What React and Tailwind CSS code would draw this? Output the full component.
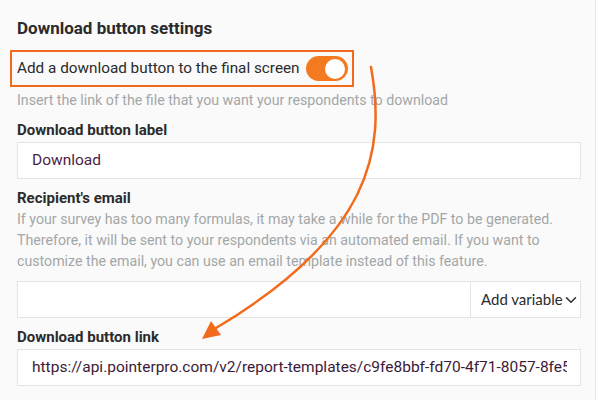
import { ChevronDown } from 'lucide-react'

const HEAD = 'font-["Roboto",sans-serif]'

export default function App() {
  return (
    <div className={`relative w-[600px] h-[400px] overflow-hidden bg-white ${HEAD}`}>
      <div className="w-[596px] h-full bg-[#fafafa] border-r border-[#e6e6e6] pl-[17px] pr-[14px] pt-[16px]">
        {/* Title */}
        <h2 className="text-[17px] leading-[24px] font-bold text-[#2b2b2b]">Download button settings</h2>

        {/* Toggle row, highlighted */}
        <div className="mt-[10px] -ml-[7px] w-[344px] h-[37px] border-2 border-[#f26b1d] flex items-center pl-[5px] pr-[4px] justify-between">
          <span className="text-[15.3px] text-[#2b2b2b]">Add a download button to the final screen</span>
          <div className="w-[42px] h-[25px] rounded-full bg-[#f47a20] flex items-center justify-end pr-[3px]">
            <div className="w-[20px] h-[20px] rounded-full bg-white" />
          </div>
        </div>
        <p className="mt-[3px] text-[14.2px] leading-[21px] text-[#a3a7a7]">
          Insert the link of the file that you want your respondents to download
        </p>

        {/* Label */}
        <div className="mt-[9px] text-[15px] leading-[20px] font-bold text-[#2b2b2b]">Download button label</div>
        <div className="mt-[2px] h-[37px] bg-white border border-[#e4e4e4] flex items-center pl-[14px] text-[15.5px] text-[#4a1f45]">
          Download
        </div>

        {/* Recipient */}
        <div className="mt-[9px] text-[15px] leading-[20px] font-bold text-[#2b2b2b]">Recipient's email</div>
        <p className="mt-[1px] text-[14.2px] leading-[21px] text-[#a3a7a7] pr-[4px]">
          If your survey has too many formulas, it may take a while for the PDF to be generated. Therefore, it will be sent to your respondents via an automated email. If you want to customize the email, you can use an email template instead of this feature.
        </p>
        <div className="mt-[9px] h-[37px] bg-white border border-[#e4e4e4] flex">
          <div className="flex-1" />
          <div className="w-[110px] border-l border-[#e4e4e4] flex items-center pl-[10px] whitespace-nowrap font-['Lato',sans-serif] text-[15px] text-[#2b2b2b]">
            Add variable
            <ChevronDown size={18} strokeWidth={2} className="shrink-0 text-[#2b2b2b] -ml-[1px]" />
          </div>
        </div>

        {/* Link */}
        <div className="mt-[9px] text-[15px] leading-[20px] font-bold text-[#2b2b2b]">Download button link</div>
        <div className="mt-[2px] h-[37px] bg-white border border-[#e4e4e4] flex items-center pl-[14px] pr-[13px] text-[15.5px] text-[#3c1a38]">
          <span className="overflow-hidden whitespace-nowrap">
            https://api.pointerpro.com/v2/report-templates/c9fe8bbf-fd70-4f71-8057-8fe58a2b1d44
          </span>
        </div>
      </div>

      {/* Annotation arrow */}
      <svg className="absolute inset-0 pointer-events-none" width="600" height="400" viewBox="0 0 600 400">
        <path d="M371 67 C 386 150 372 235 216 328" fill="none" stroke="#f26b1d" strokeWidth="2.5" strokeLinecap="round" />
        <polygon points="202,339 211,321 221,335" fill="#f26b1d" />
      </svg>
    </div>
  )
}
